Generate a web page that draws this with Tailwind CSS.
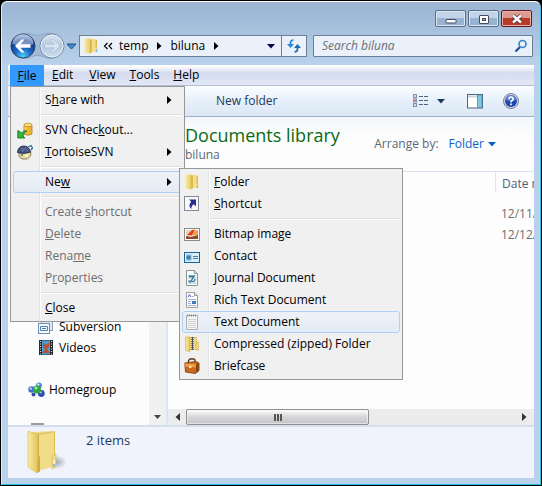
<!DOCTYPE html>
<html lang="en">
<head>
<meta charset="utf-8">
<title>biluna</title>
<script src="https://cdn.jsdelivr.net/npm/@tailwindcss/browser@4"></script>
</head>
<body class="bg-black font-['Open_Sans','Noto_Sans',sans-serif] text-[12px] leading-4 text-black">
<svg width="0" height="0" class="absolute" aria-hidden="true">
  <defs>
    <linearGradient id="gold" x1="0" x2="1" y1="0" y2="0"><stop offset="0" stop-color="#f9eca6"/><stop offset="1" stop-color="#e3c355"/></linearGradient>
    <linearGradient id="goldback" x1="0" x2="1" y1="0" y2="1"><stop offset="0" stop-color="#f0dc88"/><stop offset="1" stop-color="#f6e18a"/></linearGradient>
    <radialGradient id="backblue" cx=".5" cy=".95" r=".9"><stop offset="0" stop-color="#4fd4ff"/><stop offset=".4" stop-color="#1a66c4"/><stop offset=".75" stop-color="#123b8c"/><stop offset="1" stop-color="#7fa3d6"/></radialGradient>
    <linearGradient id="fwd" x1="0" x2="0" y1="0" y2="1"><stop offset="0" stop-color="#dbe6f2"/><stop offset=".5" stop-color="#b4c8de"/><stop offset="1" stop-color="#cfdeec"/></linearGradient>
    <symbol id="folder" viewBox="0 0 16 16">
      <path d="M6 1h7.500v13H6z" fill="url(#goldback)"/>
      <path d="M12.500 2h1.500v9l-1.500 3z" fill="#dcb94e"/>
      <path d="M1.500.5h5.500l1.500 1v13L7 15.500l-5.500-1z" fill="url(#gold)"/>
      <path d="M7.500 2v13l1-1V1.500z" fill="#cfa83d"/>
      <path d="M12 9.500h2.500V14H12z" fill="#efdc92"/><path d="M13 11.500h1V14h-1z" fill="#6fb3e6"/>
    </symbol>
  </defs>
</svg>

<div class="flex min-h-screen flex-col p-px">
<div class="flex flex-1 flex-col rounded-t-md border border-t-white border-l-[#dcebfa] border-r-[#35c5e8] border-b-[#25bfe5] bg-[#b9d1ea] px-1.5 pb-1.5">

  <header class="-mx-1.5 flex flex-col rounded-t-md bg-linear-to-b from-[#9ab4d2] to-[#b9d1ea] px-1.5 pb-[5px]">
    <div class="flex justify-end gap-0.5 pt-2 pr-0.5">
      <button aria-label="Minimize" class="flex h-[17px] w-[31px] items-center justify-center rounded-[2px] border border-[#566d8c] bg-linear-to-b from-[#c3d4e8] from-50% to-[#98b3d0] to-50% shadow-[inset_0_0_0_1px_#dbe7f3]">
        <svg width="12" height="12" viewBox="0 0 12 12"><rect x="1" y="6.500" width="10" height="3.500" rx=".5" fill="#fff" stroke="#474a5c"/></svg></button>
      <button aria-label="Maximize" class="flex h-[17px] w-[31px] items-center justify-center rounded-[2px] border border-[#566d8c] bg-linear-to-b from-[#c3d4e8] from-50% to-[#98b3d0] to-50% shadow-[inset_0_0_0_1px_#dbe7f3]">
        <svg width="12" height="12" viewBox="0 0 12 12"><rect x="1.500" y="2.500" width="9" height="8" rx=".5" fill="#fff" stroke="#474a5c"/><rect x="4.500" y="5.500" width="3" height="2" fill="#9db7d4" stroke="#474a5c"/></svg></button>
      <button aria-label="Close" class="flex h-[17px] w-[31px] items-center justify-center rounded-[2px] border border-[#5a1a22] bg-linear-to-b from-[#dd9a90] from-50% to-[#b83a26] to-50% shadow-[inset_0_0_0_1px_#e9b1a8]">
        <svg width="12" height="12" viewBox="0 0 12 12"><path d="M2 2.500l8 7M10 2.500l-8 7" stroke="#4a3a4c" stroke-width="4.200"/><path d="M2 2.500l8 7M10 2.500l-8 7" stroke="#fff" stroke-width="2.400"/></svg></button>
    </div>

    <div class="mt-[5px] flex items-center">
      <svg width="71" height="28" viewBox="0 0 71 28" class="shrink-0">
        <path d="M15 1.500c6-1 10 2 14.500 2S38 .5 44 1.500a13 13 0 0 1 0 25c-5 .5-9-3-14.500-3s-9 3.500-14.500 3a13 13 0 0 1 0-25z" fill="#a3bad5" stroke="#8ea6c4"/>
        <circle cx="15" cy="14" r="12" fill="url(#backblue)" stroke="#2b3f6b"/>
        <path d="M4.500 12a10.500 10 0 0 1 21 0q-10 4-21 0z" fill="#fff" opacity=".42"/>
        <path d="M7 14l6.500-6.500h3l-4 4.700h10v3.600h-10l4 4.700h-3z" fill="#fff"/>
        <circle cx="44" cy="14" r="12" fill="url(#fwd)" stroke="#6f88a8"/>
        <circle cx="44" cy="14" r="11" fill="none" stroke="#e6eff8"/>
        <path d="M52 14l-6.500-6.500h-3l4 4.700h-10v3.600h10l-4 4.700h3z" fill="#d9e4f0" stroke="#a9bdd4" stroke-width=".6"/>
        <path d="M59 12h9l-4.500 5z" fill="#3c8fd0" stroke="#1c4f8a"/>
      </svg>
      <nav aria-label="Address" class="flex h-[22px] min-w-0 flex-1 items-center border border-[#6d7f97] bg-[#eaf1fa] pl-[3px]">
        <svg width="16" height="16"><use href="#folder"/></svg>
        <button class="ml-1 w-3" aria-label="Previous locations"><svg width="10" height="8" viewBox="0 0 10 8"><path d="M4.500 1l-3 3 3 3M9 1L6 4l3 3" fill="none" stroke="#000" stroke-width="1.200"/></svg></button>
        <button class="ml-1">temp</button>
        <svg class="ml-2" width="6" height="8"><path d="M1 0l4.500 4L1 8z"/></svg>
        <button class="ml-2">biluna</button>
        <svg class="ml-2" width="6" height="8"><path d="M1 0l4.500 4L1 8z"/></svg>
        <button aria-label="Recent locations" class="ml-auto flex h-full w-[21px] items-center justify-center border-r border-[#6d7f97]"><svg width="8" height="5"><path d="M0 0h8L4 4.500z" fill="#06064e"/></svg></button>
        <button aria-label="Refresh" class="flex h-full w-6 items-center justify-center"><svg width="16" height="14" viewBox="0 0 16 14"><path d="M7.500 1Q4.500 1 4.500 4v2" fill="none" stroke="#2a86cf" stroke-width="1.700"/><path d="M1 5h7L4.500 9z" fill="#2a86cf"/><path d="M8.500 13q3-.2 3-3V8" fill="none" stroke="#2467b4" stroke-width="1.700"/><path d="M8 9h7l-3.500-4z" fill="#2467b4"/></svg></button>
      </nav>
      <label class="ml-[6px] flex h-[22px] w-[220px] items-center rounded-[1px] border border-[#6d7f97] bg-[#eaf1fa] pr-1 pl-2">
        <input type="search" aria-label="Search biluna" placeholder="Search biluna" class="min-w-0 flex-1 bg-transparent italic outline-none placeholder:text-[#6b6f76]">
        <svg width="14" height="14" viewBox="0 0 14 14"><path d="M6 8l-4.500 4.500" stroke="#1f4f94" stroke-width="2.200"/><circle cx="8.500" cy="5" r="3.500" fill="#e8f4fd" stroke="#3f83c6" stroke-width="1.700"/></svg>
      </label>
      <span class="w-px"></span>
    </div>
  </header>

  <nav aria-label="Menu bar" class="relative z-10 flex h-[21px] border-b border-[#b3bfd4] bg-linear-to-b from-white from-5% via-[#d5dcee] via-40% to-[#e1e7f5] pl-0.5">
    <button class="h-[21px] w-[34px] bg-[#3399ff]"><u>F</u>ile</button>
    <button class="ml-2"><u>E</u>dit</button>
    <button class="ml-4"><u>V</u>iew</button>
    <button class="ml-3.5"><u>T</u>ools</button>
    <button class="ml-3.5"><u>H</u>elp</button>

    <div role="menu" aria-label="File" class="absolute top-[21px] left-[2px] w-[175px] border border-[#979797] bg-[#f0f0f0] p-0.5">
      <div class="absolute top-0.5 bottom-0.5 left-[28px] w-0.5 border-l border-[#e2e3e3] bg-white"></div>
      <div class="relative flex flex-col">
        <button role="menuitem" class="flex h-[22px] items-center pr-2.5 pl-8"><span>S<u>h</u>are with</span><svg class="ml-auto" width="5" height="8"><path d="M0 0l4.500 4L0 8z"/></svg></button>
        <hr class="my-[3px] ml-7 h-0.5 border-t border-b border-t-[#e0e0e0] border-b-white">
        <button role="menuitem" class="flex h-[22px] items-center pl-1"><svg class="mr-3" width="16" height="17" viewBox="0 0 16 17"><path d="M7 3v9q4 2.500 8 0V3z" fill="#f1b52c" stroke="#a9700f" stroke-width=".7"/><path d="M8.500 4v8" stroke="#fbe08a" stroke-width="1.500"/><ellipse cx="11" cy="3" rx="4" ry="1.800" fill="#fbdc7c" stroke="#b98320" stroke-width=".7"/><path d="M10 9Q5.500 8 5 11.500L3.500 10 .8 8.500V16H8l-2-2Q6 11.500 10 9z" fill="#37b93a" stroke="#126a1c" stroke-width=".8"/></svg><span>SVN Chec<u>k</u>out...</span></button>
        <button role="menuitem" class="flex h-[22px] items-center pr-2.5 pl-1"><svg class="mr-3" width="16" height="16" viewBox="0 0 16 16"><path d="M2 8h12l-.5 4-3 3H5l-3-2.500z" fill="#e6d9a2" stroke="#7c6b39" stroke-width=".8"/><path d="M.5 8.500Q1 2.500 6.500 2q5.500 0 7 6Q7 10.500.5 8.500z" fill="#4b5685" stroke="#252e56"/><path d="M4 4l2 2 3-2M6 6v2M9 5l2 2" stroke="#7580ac" fill="none" stroke-width=".8"/><path d="M11 3l3-1.500L15.500 4 14 6" fill="none" stroke="#2f6d98" stroke-width="1.300"/><path d="M4 11h2" stroke="#333"/><path d="M8 11.500h3" stroke="#fff" stroke-width="1.500"/></svg><span><u>T</u>ortoiseSVN</span><svg class="ml-auto" width="5" height="8"><path d="M0 0l4.500 4L0 8z"/></svg></button>
        <hr class="my-[3px] ml-7 h-0.5 border-t border-b border-t-[#e0e0e0] border-b-white">
        <div class="relative">
          <button role="menuitem" aria-expanded="true" class="flex h-[22px] w-full items-center rounded-[3px] border border-[#aecff7] bg-linear-to-b from-[#eef1f7]/90 to-[#e4ebf6]/90 pr-[9px] pl-[31px]"><span>Ne<u>w</u></span><svg class="ml-auto" width="5" height="8"><path d="M0 0l4.500 4L0 8z"/></svg></button>

          <div role="menu" aria-label="New" class="absolute -top-[3px] left-[166px] w-[224px] border border-[#979797] bg-[#f0f0f0] p-0.5">
            <div class="absolute top-0.5 bottom-0.5 left-[28px] w-0.5 border-l border-[#e2e3e3] bg-white"></div>
            <div class="relative flex flex-col">
              <button role="menuitem" class="flex h-[22px] items-center gap-3.5 pl-0.5"><svg width="16" height="16"><use href="#folder"/></svg><span><u>F</u>older</span></button>
              <button role="menuitem" class="flex h-[22px] items-center gap-3.5 pl-0.5"><svg width="16" height="16" viewBox="0 0 16 16"><rect x=".5" y=".5" width="14" height="14" fill="#f7f8fb" stroke="#858c98"/><path d="M5 3.500h7v7L9.800 8.300Q7 10 7.500 13 3.500 10 7.200 5.700z" fill="#282f8c"/></svg><span><u>S</u>hortcut</span></button>
              <hr class="my-[3px] ml-7 h-0.5 border-t border-b border-t-[#e0e0e0] border-b-white">
              <button role="menuitem" class="flex h-[22px] items-center gap-3.5 pl-0.5"><svg width="16" height="16" viewBox="0 0 16 16"><rect x=".5" y="2.500" width="15" height="12" fill="#fff" stroke="#8b8b8b"/><path d="M2 4h12v9H2z" fill="#e6d8c0"/><path d="M2 10l5 1 7-2v4H2z" fill="#8a4a2a"/><path d="M3 9l5-5 3-.5-3 6z" fill="#e0401f"/><path d="M8 9l4-5 2 1v4z" fill="#f1a23a"/></svg><span>Bitmap image</span></button>
              <button role="menuitem" class="flex h-[22px] items-center gap-3.5 pl-0.5"><svg width="16" height="16" viewBox="0 0 16 16"><rect x=".5" y="4.500" width="15" height="10" fill="#d8effb" stroke="#1b6694"/><rect x="2" y="6.500" width="5.500" height="6" fill="#7fb9dc"/><circle cx="4.700" cy="9.500" r="2" fill="#4f7894"/><path d="M9 8.500h5M9 10.500h5" stroke="#3b85b0"/></svg><span>Contact</span></button>
              <button role="menuitem" class="flex h-[22px] items-center gap-3.5 pl-0.5"><svg width="16" height="16" viewBox="0 0 16 16"><path d="M2.500.5h8l3 3v12h-11z" fill="#f8fbfc" stroke="#8a9499"/><path d="M10.500.5v3h3" fill="#ddd" stroke="#8a9499"/><path d="M4 5.500h8M4 8h8M4 13h8" stroke="#9bc0d0"/><path d="M5 6.500h5L7 11q4 1.500 4-2M4.500 10.500l2 2" fill="none" stroke="#28748f" stroke-width="1.300"/></svg><span>Journal Document</span></button>
              <button role="menuitem" class="flex h-[22px] items-center gap-3.5 pl-0.5"><svg width="16" height="16" viewBox="0 0 16 16"><path d="M2.500.5h8l3 3v12h-11z" fill="#fcfcfd" stroke="#9a9da3"/><path d="M10.500.5v3h3" fill="#ddd" stroke="#9a9da3"/><path d="M4 5l1.500-2.500L7 5" fill="none" stroke="#5a5ad0"/><path d="M8 4.500h2M4 7.500h8M4 9.500h3M4 11.500h3M4 13.500h8" stroke="#a3b0d8"/><path d="M8 9h4v3H8z" fill="#3f79b8"/></svg><span>Rich Text Document</span></button>
              <button role="menuitem" class="flex h-[22px] items-center gap-3.5 rounded-[3px] border border-[#aecff7] bg-linear-to-b from-[#eef1f7]/90 to-[#e4ebf6]/90 pl-px"><svg width="16" height="16" viewBox="0 0 16 16"><path d="M2.500 1.500h11v14h-11z" fill="#f6f6f6" stroke="#b0b0b0"/><path d="M3 1.500h10" stroke="#8a8a8a" stroke-width="2" stroke-dasharray="1 1"/><path d="M4 5.500h8M4 7.500h8M4 9.500h8M4 11.500h8M4 13.500h8" stroke="#cfd2d5"/></svg><span>Text Document</span></button>
              <button role="menuitem" class="flex h-[22px] items-center gap-3.5 pl-0.5"><svg width="16" height="16" viewBox="0 0 16 16"><path d="M6 1.500h6.500v12H6z" fill="#f0dc88" stroke="#d0ac45" stroke-width=".6"/><path d="M1.500 1h4.500v14.500l-4.500-1z" fill="url(#gold)" stroke="#d0ac45" stroke-width=".6"/><path d="M12 6h2.500v8H12z" fill="#efdc92" stroke="#c9a74a" stroke-width=".6"/><path d="M8.500 1v13" stroke="#7b7f86" stroke-width="3" stroke-dasharray="1 1"/><path d="M8.500 1v13" stroke="#4a5160"/></svg><span>Compressed (zipped) Folder</span></button>
              <button role="menuitem" class="flex h-[22px] items-center gap-3.5 pl-0.5"><svg width="16" height="16" viewBox="0 0 16 16"><path d="M4.500 5V2.500L6 1h4l1 1v2" fill="none" stroke="#5e3418" stroke-width="1.300"/><path d="M.8 5l11-1.500L15 5v7.500L11.500 15.500 1.500 14z" fill="#c96a1e" stroke="#6c3410" stroke-width=".8"/><path d="M1 5.500l11 .5v3.500l-11-1z" fill="#ee9a45"/><path d="M12 6l3-1v7.500L12 15z" fill="#8c4514"/><path d="M5 7.500h2.500V10H5z" fill="#f6dfa0"/></svg><span>Briefcase</span></button>
            </div>
          </div>
        </div>
        <hr class="my-[3px] ml-7 h-0.5 border-t border-b border-t-[#e0e0e0] border-b-white">
        <button role="menuitem" disabled class="flex h-[22px] items-center pl-8 text-[#6d6d6d]"><span>Create <u>s</u>hortcut</span></button>
        <button role="menuitem" disabled class="flex h-[22px] items-center pl-8 text-[#6d6d6d]"><span><u>D</u>elete</span></button>
        <button role="menuitem" disabled class="flex h-[22px] items-center pl-8 text-[#6d6d6d]"><span>Rena<u>m</u>e</span></button>
        <button role="menuitem" disabled class="flex h-[22px] items-center pl-8 text-[#6d6d6d]"><span>P<u>r</u>operties</span></button>
        <hr class="my-[3px] ml-7 h-0.5 border-t border-b border-t-[#e0e0e0] border-b-white">
        <button role="menuitem" class="flex h-[22px] items-center pl-8"><span><u>C</u>lose</span></button>
      </div>
    </div>
  </nav>

  <div role="toolbar" aria-label="Folder actions" class="flex h-[31px] items-center border-b border-[#a0afc9] bg-linear-to-b from-[#fbfdff] from-0% via-[#e6f0fa] via-50% to-[#dce7f5] pr-[15px] pl-[208px] text-[#1e395b]">
    <button>New folder</button>
    <button aria-label="Change your view" class="ml-auto flex items-center gap-2">
      <svg width="17" height="14" viewBox="0 0 17 14"><g fill="#fff" stroke="#8092a8"><rect x="1.500" y=".5" width="3" height="3"/><rect x="1.500" y="5" width="3" height="3"/><rect x="1.500" y="9.500" width="3" height="3"/></g><path d="M2.500 2h1M2.500 11h1" stroke="#3a7bc8"/><path d="M2.300 6.500h1.500" stroke="#d03030" stroke-width="1.500"/><path d="M7 2.500h4M12 2.500h4M7 6.500h4M12 6.500h4M7 10.500h4M12 10.500h4" stroke="#4f6280"/></svg>
      <svg width="8" height="5"><path d="M0 0h8L4 4.500z" fill="#1e395b"/></svg>
    </button>
    <button aria-label="Show the preview pane" class="ml-[22px]"><svg width="16" height="15" viewBox="0 0 16 15"><rect x=".5" y=".5" width="15" height="13.500" fill="#fff" stroke="#51657f"/><path d="M1 1.500h14v2H1z" fill="#c9d6e5"/><rect x="10.500" y="1" width="4.500" height="12.500" fill="#7fcbe2" stroke="#4c8aa6" stroke-width=".8"/></svg></button>
    <button aria-label="Help" class="ml-5"><svg width="16" height="16" viewBox="0 0 16 16"><circle cx="8" cy="8" r="7.500" fill="#d5d9e2" stroke="#777f90"/><circle cx="8" cy="8" r="6" fill="#2148b0"/><path d="M2.500 7a5.500 5 0 0 1 11 0q-5.500 2-11 0z" fill="#7f9be0" opacity=".6"/><path d="M5.800 6.200Q6 4 8 4t2.200 1.900Q10.200 7.200 8 8.200v1.300" fill="none" stroke="#fff" stroke-width="1.500"/><path d="M8 10.600v1.700" stroke="#fff" stroke-width="1.600"/></svg></button>
  </div>

  <div class="flex flex-1">
    <aside class="flex w-[141px] shrink-0 flex-col justify-end overflow-hidden bg-[#fcfcfc]">
      <a href="#" class="flex h-[21px] items-center gap-1.5 pl-[30px]"><svg width="15" height="14" viewBox="0 0 15 14"><rect x="3.500" y=".5" width="11" height="10" fill="#dce8f5" stroke="#8aa5c4"/><rect x=".5" y="3.500" width="11" height="10" fill="#f4f9fd" stroke="#6d8fb4"/><path d="M2.500 6.500h7v4h-7z" fill="none" stroke="#5580b5"/><path d="M4 8.500h4" stroke="#5580b5"/></svg>Subversion</a>
      <a href="#" class="flex h-[21px] items-center gap-1.5 pl-[30px]"><svg width="15" height="15" viewBox="0 0 15 15"><path d="M1 0h14v15H1z" fill="#20242c"/><path d="M4 .5h8v14H4z" fill="#4aa3d8"/><path d="M5 2l3 3 3-3v5L9 9l3 4H4l3-4-2-2z" fill="#b5532f"/><path d="M2.500 1v14M13.500 1v14" stroke="#dfe6ee" stroke-width="1.200" stroke-dasharray="1 1.500"/></svg>Videos</a>
      <a href="#" class="mt-[21px] flex h-[21px] items-center gap-1 pl-5"><svg width="17" height="16" viewBox="0 0 17 16"><circle cx="3.500" cy="7.500" r="3.200" fill="#3b6fd0"/><circle cx="2.800" cy="6.500" r="1.200" fill="#bcd3f7"/><circle cx="11" cy="3.500" r="3" fill="#5b86d8"/><circle cx="10.300" cy="2.600" r="1.200" fill="#d3e1fa"/><circle cx="13.300" cy="11.500" r="3.400" fill="#2d50b4"/><circle cx="12.500" cy="10.300" r="1.200" fill="#a9c2f2"/><circle cx="5.500" cy="12.500" r="2" fill="#2d4fa8"/><circle cx="9" cy="7.500" r="4" fill="#2fa83a"/><circle cx="8" cy="6" r="1.500" fill="#a6eda0"/></svg>Homegroup</a>
      <div class="mt-[23px] ml-[23px] h-[2px] w-[13px] bg-[#9b9b9b]"></div>
    </aside>
    <div class="flex w-[17px] shrink-0 items-end justify-center bg-[#f0f0f0] pb-1.5"><svg width="7" height="4"><path d="M0 0h7L3.500 4z" fill="#444"/></svg></div>
    <main class="flex min-w-0 flex-1 flex-col overflow-hidden border-l-2 border-[#dbe6f4] bg-[#fdfdfd]">
      <div class="flex h-[55px] items-start border-b border-[#d9e3ef] bg-linear-to-b from-[#f4f7fb] to-[#fdfdfd] to-40% pr-[38px] pl-[17px]">
        <div class="pt-[7px]">
          <h1 class="text-[18px] leading-[22px] whitespace-nowrap text-[#0a6b16]">Documents library</h1>
          <p class="leading-[18px] text-[#5a6779]">biluna</p>
        </div>
        <div class="ml-auto flex items-center gap-2.5 pt-[19px] whitespace-nowrap"><span class="text-[#5a6779]">Arrange by:</span><button class="flex items-center gap-1 text-[#0a5fc4]">Folder<svg width="8" height="5"><path d="M0 0h8L4 4.500z" fill="#0a5fc4"/></svg></button></div>
      </div>
      <table class="w-full table-fixed text-left text-[#6d6d6d]">
        <thead><tr class="h-[26px]"><th class="p-0"></th><th class="w-[39px] p-0 align-top font-normal whitespace-nowrap text-[#4c607a]"><div class="h-5 border-l border-[#dce6f2] pt-1 pl-1.5">Date modified</div></th></tr></thead>
        <tbody>
          <tr class="h-[27px]"><td></td><td class="p-0 pb-[3px] pl-1.5 align-bottom whitespace-nowrap">12/11/</td></tr>
          <tr class="h-[21px]"><td></td><td class="p-0 pb-[3px] pl-1.5 align-bottom whitespace-nowrap">12/12/</td></tr>
        </tbody>
      </table>
      <div class="mt-auto flex h-4 items-center bg-[#ececec] px-[7px]">
        <svg width="5" height="8" class="shrink-0"><path d="M5 0v8L.5 4z" fill="#333"/></svg>
        <div class="ml-[6px] flex h-4 w-[52%] shrink-0 items-center justify-center gap-px rounded-[2px] border border-[#8f8f8f] bg-linear-to-b from-[#f5f5f5] from-10% via-[#d6d6d8] via-50% to-[#c4c4c7] shadow-[inset_0_0_0_1px_#ffffff80]">
          <i class="h-[7px] w-0.5 bg-[#555]"></i><i class="h-[7px] w-0.5 bg-[#555]"></i><i class="h-[7px] w-0.5 bg-[#555]"></i>
        </div>
        <svg width="5" height="8" class="ml-auto shrink-0"><path d="M0 0v8l4.500-4z" fill="#333"/></svg>
      </div>
    </main>
  </div>

  <footer class="flex h-[53px] items-start gap-[19px] border-t-2 border-[#d3deee] bg-[#f0f3fc] pl-[18px] text-[13px] text-[#1e395b]">
    <svg width="41" height="48" viewBox="0 0 41 48" class="mt-0.5 shrink-0">
      <defs><radialGradient id="shade"><stop offset="0" stop-color="#7d8794" stop-opacity=".7"/><stop offset="1" stop-color="#7d8794" stop-opacity="0"/></radialGradient></defs>
      <ellipse cx="30" cy="33" rx="11" ry="7" fill="url(#shade)"/>
      <path d="M5 3l23-1 1 35-17 5z" fill="#f2dc88"/>
      <path d="M5 3l7 1 16-1.500v1L13 6z" fill="#e0c468"/>
      <path d="M28 2l1 .5V26l-1 4z" fill="#d8b954"/>
      <path d="M2 2l10 4v22l-1 16L2 38z" fill="url(#gold)" stroke="#d9bb5e" stroke-width=".6"/>
      <path d="M12 6v22l-1 16 3-1.500V28l-1-1V6z" fill="#d0ab45"/>
      <path d="M26 27l4-2v13l-4 2z" fill="#efd985" stroke="#d5b654" stroke-width=".6"/>
      <path d="M27.500 31h1.200v6l-1.200.5z" fill="#fff"/><path d="M27.500 35h1.200v2.500h-1.200z" fill="#4a9be0"/>
    </svg>
    <span class="pt-[5px]">2 items</span>
  </footer>
</div>
</div>
</body>
</html>
